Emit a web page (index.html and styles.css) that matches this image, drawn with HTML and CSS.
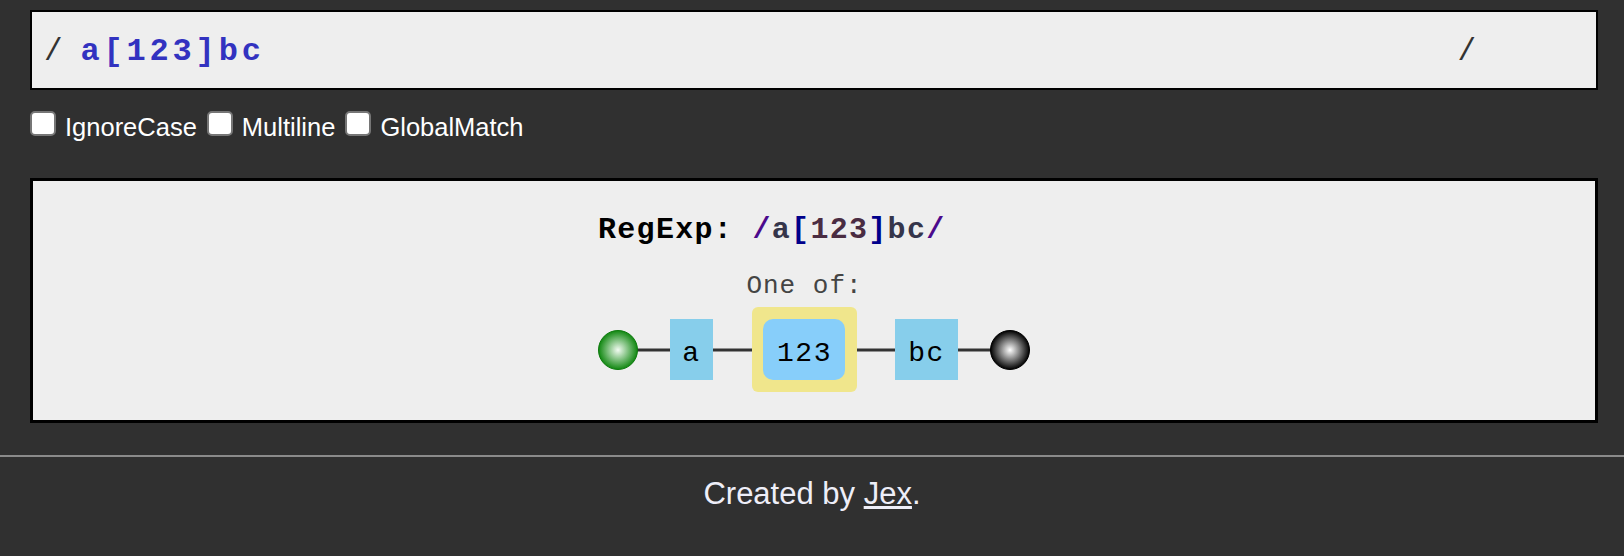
FILE: index.html
```html
<!DOCTYPE html>
<html lang="en">
<head>
<meta charset="utf-8">
<title>Regulex</title>
<link rel="stylesheet" href="styles.css">
</head>
<body>
<div class="wrap">
  <div class="input-box">
    <span class="slash">/</span>
    <span class="pattern">a[123]bc</span>
    <span class="slash">/</span>
  </div>
  <div class="flags">
    <label class="flag"><input type="checkbox" class="cb"><span>IgnoreCase</span></label>
    <label class="flag"><input type="checkbox" class="cb"><span>Multiline</span></label>
    <label class="flag"><input type="checkbox" class="cb"><span>GlobalMatch</span></label>
  </div>
  <div class="graph-box">
    <div class="graph">
      <div class="title"><span class="t-label">RegExp:</span> <span class="t-slash">/</span><span class="t-lit">a</span><span class="t-br">[</span><span class="t-set">123</span><span class="t-br">]</span><span class="t-lit">bc</span><span class="t-slash">/</span></div>
      <svg class="rail" width="432" height="130" viewBox="0 0 432 130" xmlns="http://www.w3.org/2000/svg">
        <defs>
          <radialGradient id="gStart" cx="50%" cy="50%" r="50%">
            <stop offset="0" stop-color="#f2fbf2"/>
            <stop offset="1" stop-color="#118811"/>
          </radialGradient>
          <radialGradient id="gEnd" cx="50%" cy="50%" r="50%">
            <stop offset="0" stop-color="#ffffff"/>
            <stop offset="1" stop-color="#000000"/>
          </radialGradient>
        </defs>
        <g stroke="#333" stroke-width="3">
          <line x1="39" y1="84" x2="72" y2="84"/>
          <line x1="115" y1="84" x2="154" y2="84"/>
          <line x1="259" y1="84" x2="297" y2="84"/>
          <line x1="360" y1="84" x2="393" y2="84"/>
        </g>
        <circle cx="20" cy="84" r="19.5" fill="url(#gStart)" stroke="#0d7a0d" stroke-width="1"/>
        <circle cx="412" cy="84" r="19.5" fill="url(#gEnd)" stroke="#000" stroke-width="1"/>
        <text class="label" x="206.5" y="27" text-anchor="middle">One of:</text>
        <rect x="72" y="53" width="43" height="61" fill="#87ceeb"/>
        <text class="lit" x="93.5" y="95" text-anchor="middle">a</text>
        <rect x="154" y="41" width="105" height="85" rx="6" fill="#f0e68c"/>
        <rect x="165" y="53" width="82" height="61" rx="10" fill="#87cefa"/>
        <text class="lit" x="206.5" y="95" text-anchor="middle">123</text>
        <rect x="297" y="53" width="63" height="61" fill="#87ceeb"/>
        <text class="lit" x="328.5" y="95" text-anchor="middle">bc</text>
      </svg>
    </div>
  </div>
</div>
<hr class="rule">
<footer class="footer">Created by <a class="author" href="#">Jex</a>.</footer>
</body>
</html>
```
FILE: styles.css
```css
html, body {
  margin: 0;
  padding: 0;
  background: #303030;
}

body {
  font-family: "Liberation Sans", Arial, sans-serif;
  color: #fff;
}

.wrap {
  padding: 10px 26px 0 30px;
}

.input-box {
  height: 80px;
  box-sizing: border-box;
  border: 2px solid #000;
  background: #eeeeee;
  display: flex;
  align-items: flex-start;
  padding: 25px 0 0 12px;
  font-family: "Liberation Mono", "Courier New", monospace;
  font-size: 31px;
  line-height: 30px;
}

.slash {
  color: #333;
}

.pattern {
  width: 1377px;
  margin-left: 18px;
  color: #3232c0;
  font-weight: bold;
  font-size: 32px;
  letter-spacing: 3.8px;
}

.flags {
  display: flex;
  align-items: flex-end;
  margin-top: 21px;
  gap: 10px;
}

.flag {
  display: flex;
  align-items: flex-end;
  gap: 9px;
  font-size: 25.5px;
  line-height: 25px;
  color: #fff;
}

.cb {
  appearance: none;
  -webkit-appearance: none;
  width: 26px;
  height: 25px;
  margin: 0 0 4px 0;
  box-sizing: border-box;
  border: 2px solid #767676;
  border-radius: 5px;
  background: #fff;
}

.graph-box {
  margin-top: 38px;
  border: 3px solid #000;
  background: #eeeeee;
  padding: 34px 0 24px;
  display: flex;
  justify-content: center;
}

.graph {
  width: 432px;
  display: flex;
  flex-direction: column;
  gap: 21px;
}

.title {
  font-family: "Liberation Mono", "Courier New", monospace;
  font-weight: bold;
  font-size: 30px;
  line-height: 30px;
  letter-spacing: 1.3px;
  color: #000;
  white-space: nowrap;
}

.t-slash { color: #4b0a8c; }
.t-lit { color: #35354a; }
.t-br { color: #00008b; }
.t-set { color: #4a2c42; }

.rail {
  display: block;
}

.rail .label {
  font-family: "Liberation Mono", "Courier New", monospace;
  font-size: 26px;
  letter-spacing: 1px;
  fill: #444;
}

.rail .lit {
  font-family: "Liberation Mono", "Courier New", monospace;
  font-size: 28px;
  letter-spacing: 1.5px;
  fill: #000;
}

.rule {
  margin: 32px 0 0;
  border: 0;
  height: 2px;
  background: #8a8a8a;
}

.footer {
  padding-top: 19px;
  text-align: center;
  font-size: 31px;
  line-height: 36px;
  color: #eeeef8;
}

.author {
  color: #eeeef8;
  text-decoration: underline;
}
```
